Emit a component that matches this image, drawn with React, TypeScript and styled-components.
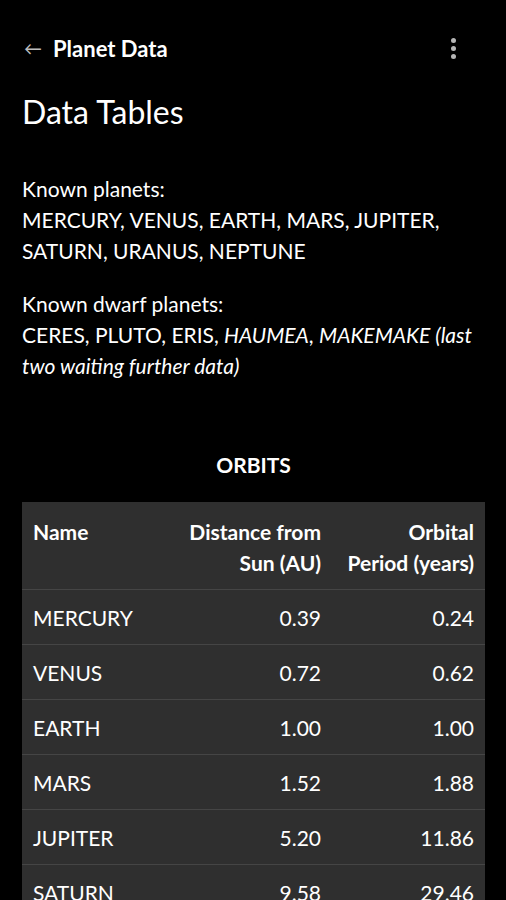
import styled, { createGlobalStyle } from 'styled-components'

const GlobalStyle = createGlobalStyle`
  body {
    margin: 0;
    background: #000;
    color: #fff;
    font-family: Lato, "Noto Sans", sans-serif;
  }
`

const Page = styled.main`
  min-height: 100vh;
  padding: 20px 21px 0 22px;
  box-sizing: border-box;
  background: #000;
  overflow: hidden;
`

const TopBar = styled.header`
  height: 56px;
  display: flex;
  align-items: center;
  justify-content: space-between;
`

const BackLink = styled.div`
  display: flex;
  align-items: center;
  gap: 11px;
  font-size: 22px;
  font-weight: 700;
  color: #fff;
`

const Arrow = styled.span`
  color: #bdbdbd;
  font-size: 18px;
  font-weight: 400;
  line-height: 1;
  margin-left: 2px;
`

const MenuButton = styled.div`
  width: 24px;
  display: flex;
  flex-direction: column;
  align-items: center;
  gap: 3px;
  margin-right: 20px;
`

const Dot = styled.span`
  width: 5px;
  height: 5px;
  border-radius: 50%;
  background: #b5b5b5;
`

const Title = styled.h1`
  margin: 18px 0 0;
  font-size: 32px;
  line-height: 36px;
  font-weight: 400;
`

const Paragraph = styled.p`
  margin: 0;
  font-size: 21px;
  line-height: 31px;

  & + & {
    margin-top: 22px;
  }
`

const FirstParagraph = styled(Paragraph)`
  margin-top: 43px;
`

const Caption = styled.h2`
  margin: 72px 0 25px;
  text-align: center;
  font-size: 21px;
  line-height: 24px;
  font-weight: 700;
`

const Table = styled.table`
  width: 463px;
  border-collapse: collapse;
  table-layout: fixed;
  background: #2f2f2f;
  font-size: 21px;
  line-height: 31px;
`

const HeadCell = styled.th<{ $align?: 'left' | 'right' }>`
  padding: 14px 11px 11px;
  text-align: ${(p) => p.$align ?? 'left'};
  vertical-align: top;
  font-weight: 700;
  white-space: nowrap;
`

const Row = styled.tr`
  border-top: 1px solid #454545;
`

const Cell = styled.td<{ $align?: 'left' | 'right' }>`
  padding: 12px 11px 11px;
  height: 31px;
  text-align: ${(p) => p.$align ?? 'left'};
  white-space: nowrap;
`

const orbits = [
  { name: 'MERCURY', distance: '0.39', period: '0.24' },
  { name: 'VENUS', distance: '0.72', period: '0.62' },
  { name: 'EARTH', distance: '1.00', period: '1.00' },
  { name: 'MARS', distance: '1.52', period: '1.88' },
  { name: 'JUPITER', distance: '5.20', period: '11.86' },
  { name: 'SATURN', distance: '9.58', period: '29.46' },
  { name: 'URANUS', distance: '19.22', period: '84.01' },
  { name: 'NEPTUNE', distance: '30.06', period: '164.79' },
]

const App = () => (
  <>
    <GlobalStyle />
    <Page>
      <TopBar>
        <BackLink>
          <Arrow>←</Arrow>
          Planet Data
        </BackLink>
        <MenuButton>
          <Dot />
          <Dot />
          <Dot />
        </MenuButton>
      </TopBar>

      <Title>Data Tables</Title>

      <FirstParagraph>
        Known planets:
        <br />
        MERCURY, VENUS, EARTH, MARS, JUPITER, SATURN, URANUS, NEPTUNE
      </FirstParagraph>
      <Paragraph>
        Known dwarf planets:
        <br />
        CERES, PLUTO, ERIS, <i>HAUMEA</i>, <i>MAKEMAKE (last two waiting further data)</i>
      </Paragraph>

      <Caption>ORBITS</Caption>

      <Table>
        <colgroup>
          <col style={{ width: 156 }} />
          <col style={{ width: 154 }} />
          <col style={{ width: 153 }} />
        </colgroup>
        <thead>
          <tr>
            <HeadCell>Name</HeadCell>
            <HeadCell $align="right">
              Distance from
              <br />
              Sun (AU)
            </HeadCell>
            <HeadCell $align="right">
              Orbital
              <br />
              Period (years)
            </HeadCell>
          </tr>
        </thead>
        <tbody>
          {orbits.map((o) => (
            <Row key={o.name}>
              <Cell>{o.name}</Cell>
              <Cell $align="right">{o.distance}</Cell>
              <Cell $align="right">{o.period}</Cell>
            </Row>
          ))}
        </tbody>
      </Table>
    </Page>
  </>
)

export default App
